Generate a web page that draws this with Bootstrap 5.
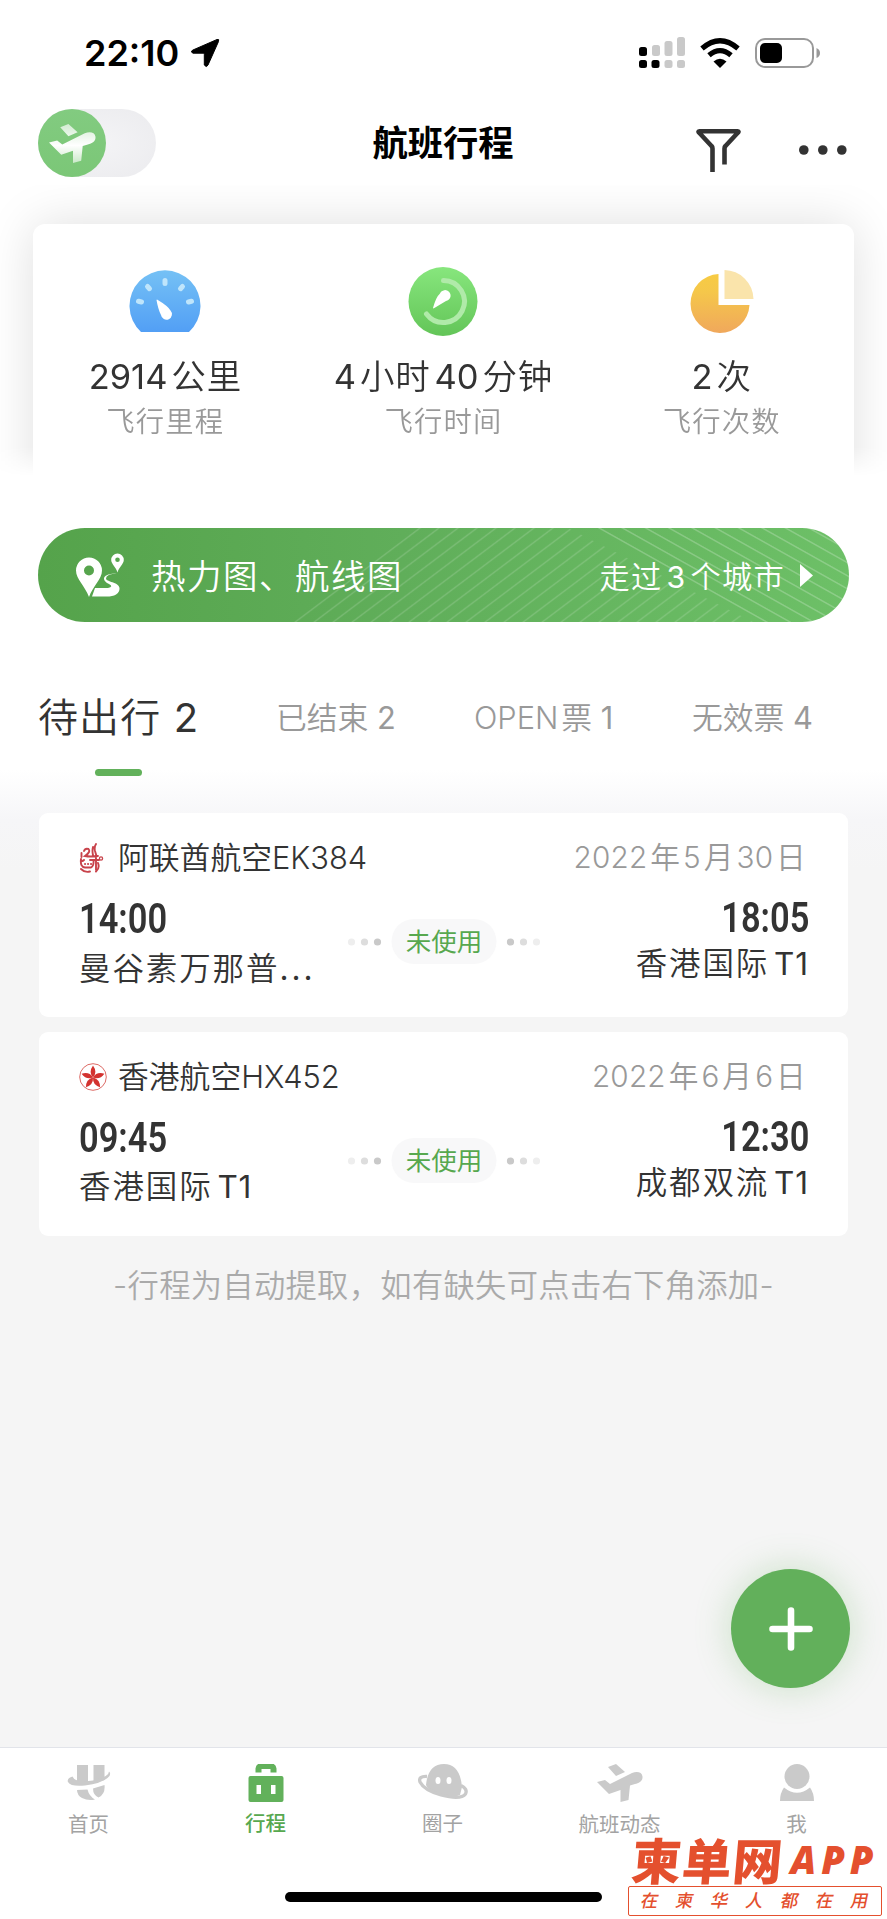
<!DOCTYPE html>
<html lang="zh-CN">
<head>
<meta charset="utf-8">
<meta name="viewport" content="width=device-width, initial-scale=1">
<title>航班行程</title>
<link href="https://cdn.jsdelivr.net/npm/bootstrap@5.3.0/dist/css/bootstrap.min.css" rel="stylesheet">
<style>
body{font-family:Inter,"Noto Sans CJK SC",sans-serif;color:#333;background:#fff;font-weight:350;line-height:1}
.screen{width:887px;height:1919px;overflow:hidden;background:#fff}
svg{display:block;flex:none}
.tx{white-space:nowrap;display:block;line-height:1}
.dim{color:#999}
.num{font-weight:400}
/* status bar */
.statusbar{height:99px;padding:7px 66px 0 84px}
.clock{font-size:36px;font-weight:600;color:#000}
/* title bar */
.titlebar{height:86px;padding:10px 39px 0 38px}
.switch{width:118px;height:68px;background:radial-gradient(#f4f4f6,#ebebee)}
.switch-knob{width:68px;height:68px;background:linear-gradient(#82cb80,#7bc777)}
.title{font-size:35.3px;font-weight:700;color:#000}
/* statistics */
.stats-zone{height:291px;padding:39px 33px 0;overflow:hidden;-webkit-mask-image:linear-gradient(#000 90%,transparent);mask-image:linear-gradient(#000 90%,transparent)}
.stats{height:300px;border-radius:12px;background:#fff;box-shadow:0 0 50px rgba(0,0,0,.13)}
.stats .ico{height:136px;padding-top:43px}
.value{font-size:34.5px;letter-spacing:.8px;height:48px}
.value .num{letter-spacing:0}
.label{font-size:28.3px;letter-spacing:1.2px}
/* map banner */
.banner{height:94px;margin:52px 38px 0;border-radius:47px;background:linear-gradient(90deg,#55a34b,#60ae5a 45%,#6dc067);color:#fff;padding:0 36px 0 37px}
.banner .lines{left:0;top:0}
.banner .tx{padding-top:4px}
.banner .big{font-size:34.5px;letter-spacing:1.5px;margin-left:26px}
.banner .small-t{font-size:30.2px;letter-spacing:1.3px}
/* tabs */
.tabs{height:148px;padding:0 38px}
.tab-i{font-size:30.8px;color:#999;height:76px;flex:none}
.tab-i.on{font-size:40px;color:#333;letter-spacing:1.1px}
.bar{width:47px;height:7px;border-radius:4px;background:#62b15b;flex:none}
/* list */
.list-zone{height:977px;background:linear-gradient(#fff,#fbfbfc 22px,#f6f6f8 50px,#f5f5f5 100px);padding:43px 39px 0}
.flight{height:204px;border-radius:9px;background:#fff;margin-bottom:15px;padding:28px 39px 0 40px}
.line-name{font-size:30.8px}
.line-date{font-size:29.7px;letter-spacing:.2px;margin-right:3px}
.time{font-family:Roboto,sans-serif;font-weight:600;font-size:42px;transform:scaleX(.82);transform-origin:0 0}
.time.r{transform-origin:100% 0}
.city{font-size:31.5px;letter-spacing:1.9px}
.city .num{letter-spacing:.9px}
.chip{width:105px;height:45px;border-radius:23px;background:#f8f8f9;color:#57a84f;font-size:25.5px;font-weight:400}
.note{font-size:31.3px;color:#aaa;margin-top:35px;letter-spacing:.3px}
.fab{right:37px;top:1569px;width:119px;height:119px;background:#62b05b;box-shadow:0 0 36px rgba(98,176,91,.3)}
/* bottom bar */
.tabbar{height:171px;border-top:1px solid #e2e4ea;background:#fff;padding:16px 2px 0 0}
.tabbar .cell{width:20%;font-size:20.5px;color:#a3a3a3;font-weight:400}
.tabbar .cell.on{color:#57a84f;font-weight:500}
.home{left:285px;top:1892px;width:317px;height:10px;border-radius:5px;background:#000}
.wm{left:628px;top:1838px;width:254px;color:#e4502e}
.wm-big{font-family:"Noto Sans CJK SC",sans-serif;font-weight:900;font-size:49.5px;line-height:38px;letter-spacing:1px;transform:skewX(-5deg)}
.wm-app{font-family:"Open Sans","Noto Sans",sans-serif;font-weight:800;font-style:italic;font-size:38px;letter-spacing:5px}
.wm-box{height:30px;border:1px solid #e4502e;border-radius:2px;font-size:17.5px;font-weight:500;padding:0 12px;margin-top:6px}
.wm-box span{transform:skewX(-12deg)}
</style>
</head>
<body>
<svg width="0" height="0" class="position-absolute">
<defs>
<symbol id="plane" viewBox="0 0 46 38"><path d="M0 18 8 16 13 20 35 9C40 7 45 8 45.500 12.500 46 17 42 19 38 20L33 21.500 31.500 36 23.500 38V26L12 30ZM11 3 19 0 28 8 19 12Z"/></symbol>
</defs>
</svg>
<main class="screen position-relative d-flex flex-column">
<header class="statusbar d-flex align-items-center justify-content-between flex-shrink-0">
 <div class="d-flex align-items-center"><span class="tx clock">22:10</span>
 <svg width="30" height="30" viewBox="0 0 30 30" style="margin-left:11px" stroke="#000" stroke-width="1" stroke-linejoin="round"><path d="M27 1.500Q29.500.7 28.500 3.500L18 27Q16.500 30 14.300 27V16.500Q14.300 15.200 13.300 15.200H3Q0 14 2.500 12.200Z"/></svg></div>
 <div class="d-flex align-items-center">
 <svg width="46" height="32" viewBox="0 0 46 32"><g fill="#c9c9c9"><rect x="13" y="8" width="8" height="11" rx="2.500"/><rect x="25.500" y="4" width="8" height="15" rx="2.500"/><rect x="38" y="0" width="8" height="19" rx="2.500"/><rect x="25.500" y="23" width="8" height="8" rx="2.500"/><rect x="38" y="23" width="8" height="8" rx="2.500"/></g><rect y="10" width="8" height="9" rx="2.500"/><rect y="23" width="8" height="8" rx="2.500"/><rect x="12.500" y="23" width="8" height="8" rx="2.500"/></svg>
 <svg width="40" height="30" viewBox="0 0 40 30" style="margin-left:15px"><g fill="none" stroke="#000" stroke-width="5.200"><path d="M2 10.500Q20-5 38 10.500"/><path d="M9 17.300Q20 8 31 17.300"/></g><path d="M13.500 23.500Q20 18 26.500 23.500L20 30Z"/></svg>
 <svg width="66" height="32" viewBox="0 0 66 32" style="margin-left:15px"><rect x="1" y="2" width="57" height="28" rx="9" fill="none" stroke="#999" stroke-width="2"/><rect x="5" y="6" width="22" height="20" rx="5"/><path d="M61.500 11Q65 12.500 65 16T61.500 21Z" fill="#999"/></svg>
 </div>
</header>
<nav class="titlebar d-flex justify-content-between flex-shrink-0 position-relative">
 <div class="switch rounded-pill"><div class="switch-knob rounded-circle d-flex align-items-center justify-content-center">
 <svg width="47" height="39" viewBox="0 0 46 38" fill="url(#pg)"><defs><linearGradient id="pg" x2="0" y2="1"><stop stop-color="#fff" stop-opacity=".65"/><stop offset=".55" stop-color="#fff"/><stop offset="1" stop-color="#fff" stop-opacity=".6"/></linearGradient></defs><path d="M0 18 8 16 13 20 35 9C40 7 45 8 45.500 12.500 46 17 42 19 38 20L33 21.500 31.500 36 23.500 38V26L12 30ZM11 3 19 0 28 8 19 12Z"/></svg></div></div>
 <h1 class="title tx mb-0" style="margin-left:34px;margin-top:17px">航班行程</h1>
 <div class="d-flex" style="margin-top:20px">
 <svg width="45" height="43" viewBox="0 0 45 43" fill="none" stroke="#333" stroke-width="4.600"><path d="M16.500 43V19.500Q16.500 18 15.500 17L3 3.500Q1.800 2.300 3.500 2.300H41.500Q43.200 2.300 42 3.500L29.500 17Q28.500 18 28.500 19.500V35.500"/></svg>
 <svg width="48" height="12" viewBox="0 0 48 12" fill="#333" style="margin:15px 1px 0 58px"><circle cx="4.800" cy="6" r="4.800"/><circle cx="23.800" cy="6" r="4.800"/><circle cx="42.800" cy="6" r="4.800"/></svg>
 </div>
</nav>
<section class="stats-zone flex-shrink-0">
 <div class="stats row g-0 text-center">
 <div class="col-4 d-flex flex-column align-items-center" style="padding-right:9px">
 <div class="ico"><svg width="72" height="66" viewBox="0 -3 72 66"><defs><linearGradient id="bl" x2="0" y2="1"><stop stop-color="#75c1f5"/><stop offset="1" stop-color="#529ff5"/></linearGradient></defs><path d="M12 62A35.500 35.500 0 1 1 60 62Z" fill="url(#bl)"/><g stroke="#bfe5fb" stroke-width="5" stroke-linecap="round"><path d="M36 10.500V13.500M18.500 16.500 20.500 18.700M53.500 16.500 51.500 18.700M9.500 31.300 12.500 32M62.500 31.300 59.500 32"/></g><path d="M28 29.500Q39 36 41.500 40.500A5.500 5.500 0 1 1 32 45Q29 39 27.500 30Z" fill="#fff"/></svg></div>
 <span class="tx value"><span class="num">2914</span>&#8202;公里</span><span class="tx label dim">飞行里程</span>
 </div>
 <div class="col-4 d-flex flex-column align-items-center">
 <div class="ico"><svg width="70" height="70" viewBox="0 0 70 70"><defs><linearGradient id="gr" x2="0" y2="1"><stop stop-color="#87e67d"/><stop offset="1" stop-color="#63c558"/></linearGradient></defs><circle cx="35" cy="34.500" r="34.500" fill="url(#gr)"/><path d="M35.500 13.500A21 21 0 1 1 18.500 47" fill="none" stroke="#b0eaa9" stroke-width="5" stroke-linecap="round"/><path d="M25 41Q28 30 32 26.500A5.500 5.500 0 1 1 38 34Q33 37 25.500 41.500Z" fill="#fff"/></svg></div>
 <span class="tx value"><span class="num">4</span>&#8202;小时&#8202;<span class="num">40</span>&#8202;分钟</span><span class="tx label dim">飞行时间</span>
 </div>
 <div class="col-4 d-flex flex-column align-items-center" style="padding-left:9px">
 <div class="ico"><svg width="64" height="66" viewBox="0 -3 64 66"><defs><linearGradient id="ye" x2="0" y2="1"><stop stop-color="#f7cb43"/><stop offset=".3" stop-color="#f5c74a"/><stop offset="1" stop-color="#f0a85c"/></linearGradient></defs><path d="M28.500 4A29.500 29.500 0 1 0 59.500 35H28.500Z" fill="url(#ye)"/><path d="M34.500 0A29.500 29.500 0 0 1 63.500 29H34.500Z" fill="#fae4ab"/></svg></div>
 <span class="tx value"><span class="num">2</span>&#8202;次</span><span class="tx label dim">飞行次数</span>
 </div>
 </div>
</section>
<section class="banner d-flex align-items-center position-relative overflow-hidden flex-shrink-0">
 <svg class="lines position-absolute" width="811" height="94"><defs><pattern id="la" width="19" height="94" patternUnits="userSpaceOnUse" patternTransform="skewX(-53)"><path d="M2 0V94" stroke="#fff" stroke-width="2.600" stroke-opacity=".14"/></pattern><pattern id="lb" width="23.300" height="94" patternUnits="userSpaceOnUse" patternTransform="skewX(60.700)"><path d="M2 0V94" stroke="#fff" stroke-width="3" stroke-opacity=".22"/></pattern></defs><path d="M380 0H530L715 94H255Z" fill="url(#la)"/><path d="M555 0H811V94H722Z" fill="url(#lb)"/></svg>
 <svg class="position-relative" width="50" height="46" viewBox="0 0 50 46" fill="#fff"><path fill-rule="evenodd" d="M14 5.500A13 13 0 0 0 1 18.500C1 27 10 34 14 45 18 34 27 27 27 18.500A13 13 0 0 0 14 5.500ZM14 13.500A5 5 0 1 1 14 23.500 5 5 0 1 1 14 13.500Z"/><path fill-rule="evenodd" d="M42.500 1.500A6.300 6.300 0 0 0 36.200 8C36.200 12 41 15 42.500 20.500 44 15 48.800 12 48.800 8A6.300 6.300 0 0 0 42.500 1.500ZM42.500 5.500A2.300 2.300 0 1 1 42.500 10.100 2.300 2.300 0 1 1 42.500 5.500Z"/><path d="M42 21.500Q31 22 31 26.500C31 30 44 30 44.500 36 45 42 39 44.500 32 44.500H17L20 36H33Q39 34.500 34 32C26 28 27 21.500 42 21.500Z"/></svg>
 <span class="tx big position-relative">热力图、航线图</span>
 <span class="tx small-t ms-auto position-relative">走过&#8202;<span class="num">3</span>&#8202;个城市</span>
 <svg class="position-relative" width="13" height="23" viewBox="0 0 13 23" fill="#fff" style="margin-left:15px"><path d="M0 0 13 11.500 0 23Z"/></svg>
</section>
<section class="tabs position-relative d-flex flex-shrink-0" style="padding-top:57px">
 <div class="d-flex flex-column" style="width:238px"><span class="tx tab-i on" style="margin-top:19px">待出行 <span class="num">2</span></span><i class="bar" style="margin:-5px 0 0 57px"></i></div>
 <span class="tx tab-i" style="width:198px;margin-top:24px">已结束 <span class="num">2</span></span>
 <span class="tx tab-i" style="width:218px;margin-top:24px">OPEN&#8202;票 <span class="num">1</span></span>
 <span class="tx tab-i" style="margin-top:24px">无效票 <span class="num">4</span></span>
</section>
<section class="list-zone flex-shrink-0">
 <article class="flight">
 <div class="d-flex align-items-center" style="height:34px">
 <svg width="26" height="30" viewBox="0 0 26 30" fill="none" stroke="#c8434b" stroke-linecap="round"><path stroke-width="1.900" d="M17 1Q15 4 16 8L17.500 13M14 4Q13 8 14 12M5 8Q6 5 9.500 6 12 9 6 13 11 14 19 13M2.500 10V14M11 17H20M17 15V27M2 16Q1 24 6 24.500H12Q15 23 14.500 17M2 17Q3 19 5 17M2 26Q6 30 11 28.500M19 20Q21 25 17 28.500"/><circle cx="22" cy="15.500" r="1.600" stroke-width="1.300"/><path stroke-width="2" d="M6 21h.1M9 21h.1M12 21h.1"/></svg>
 <span class="tx line-name" style="margin-left:13px">阿联酋航空EK384</span><span class="tx line-date dim ms-auto">2022&#8202;年&#8202;5&#8202;月&#8202;30&#8202;日</span></div>
 <div class="d-flex position-relative justify-content-between">
 <div style="padding-top:23px"><span class="tx time">14:00</span><span class="tx city" style="margin-top:13px">曼谷素万那普<span class="num" style="letter-spacing:3px">...</span></span></div>
 <div class="d-flex align-items-center position-absolute top-0 start-50 translate-middle-x" style="margin-top:44px">
 <svg width="36" height="8" viewBox="0 0 36 8"><circle cx="5" cy="4" r="3.600" fill="#eee"/><circle cx="18" cy="4" r="3.600" fill="#ddd"/><circle cx="31" cy="4" r="3.600" fill="#c9c9c9"/></svg>
 <span class="chip d-flex align-items-center justify-content-center text-nowrap" style="margin:0 9px 0 9px">未使用</span>
 <svg width="36" height="8" viewBox="0 0 36 8"><circle cx="5" cy="4" r="3.600" fill="#c9c9c9"/><circle cx="18" cy="4" r="3.600" fill="#ddd"/><circle cx="31" cy="4" r="3.600" fill="#eee"/></svg></div>
 <div class="text-end" style="padding-top:22px"><span class="tx time r">18:05</span><span class="tx city" style="margin-top:9px">香港国际&#8202;<span class="num">T1</span></span></div>
 </div>
 </article>
 <article class="flight">
 <div class="d-flex align-items-center" style="height:34px">
 <svg width="28" height="28" viewBox="0 0 28 28"><circle cx="14" cy="14" r="13.300" fill="none" stroke="#dd6b66" stroke-width="1"/><g fill="#d3322f"><path id="pt" d="M14 14.500Q9.300 9 14 2.500 18.700 9 14 14.500Z"/><use href="#pt" transform="rotate(72 14 14.500)"/><use href="#pt" transform="rotate(144 14 14.500)"/><use href="#pt" transform="rotate(216 14 14.500)"/><use href="#pt" transform="rotate(288 14 14.500)"/></g></svg>
 <span class="tx line-name" style="margin-left:11px">香港航空HX452</span><span class="tx line-date dim ms-auto">2022&#8202;年&#8202;6&#8202;月&#8202;6&#8202;日</span></div>
 <div class="d-flex position-relative justify-content-between">
 <div style="padding-top:23px"><span class="tx time">09:45</span><span class="tx city" style="margin-top:12px">香港国际&#8202;<span class="num">T1</span></span></div>
 <div class="d-flex align-items-center position-absolute top-0 start-50 translate-middle-x" style="margin-top:44px">
 <svg width="36" height="8" viewBox="0 0 36 8"><circle cx="5" cy="4" r="3.600" fill="#eee"/><circle cx="18" cy="4" r="3.600" fill="#ddd"/><circle cx="31" cy="4" r="3.600" fill="#c9c9c9"/></svg>
 <span class="chip d-flex align-items-center justify-content-center text-nowrap" style="margin:0 9px 0 9px">未使用</span>
 <svg width="36" height="8" viewBox="0 0 36 8"><circle cx="5" cy="4" r="3.600" fill="#c9c9c9"/><circle cx="18" cy="4" r="3.600" fill="#ddd"/><circle cx="31" cy="4" r="3.600" fill="#eee"/></svg></div>
 <div class="text-end" style="padding-top:22px"><span class="tx time r">12:30</span><span class="tx city" style="margin-top:9px">成都双流&#8202;<span class="num">T1</span></span></div>
 </div>
 </article>
 <p class="note tx text-center mb-0">-行程为自动提取，如有缺失可点击右下角添加-</p>
</section>
<button class="fab position-absolute rounded-circle border-0 p-0 d-flex align-items-center justify-content-center" aria-label="添加"><svg width="44" height="44" viewBox="0 0 44 44" stroke="#fff" stroke-width="6.600" stroke-linecap="round"><path d="M22 3.500V40.500M3.500 22H40.500"/></svg></button>
<footer class="tabbar d-flex flex-shrink-0">
 <div class="cell d-flex flex-column align-items-center"><svg width="44" height="40" viewBox="0 0 44 40" fill="#cacaca"><path d="M10 1H21V20H10ZM26.500 1H37.500V16L26.500 19ZM10 26 20.500 25.500Q22 32 28 35.500 21 37 15 34 10 31 10 26ZM26 24.500 37.500 21Q38.500 30 31.500 33.500 26 31 26 24.500Z"/><path d="M5.500 12.500Q-.5 14.500 1 18 4 23 18 21.500 37 19 42.500 12 44 9 42 7.500 42 13 26 16.500 8 19 5.500 12.500Z"/></svg><span class="tx" style="margin-top:11px">首页</span></div>
 <div class="cell on d-flex flex-column align-items-center"><svg width="36" height="40" viewBox="0 0 36 40"><path fill="#62b15b" fill-rule="evenodd" d="M7.500 8.500V4.500Q8-.5 12.500-.5H24Q28 0 28.500 4.500V8.500H22.500V5H13.500V8.500ZM2.500 12H33.500Q35.500 12 35.500 14V36Q35.500 38 33.500 38H2.500Q.5 38 .5 36V14Q.5 12 2.500 12ZM8.500 21V30H13V21ZM23 21V30H27.500V21Z"/></svg><span class="tx" style="margin-top:10px">行程</span></div>
 <div class="cell d-flex flex-column align-items-center"><svg width="52" height="40" viewBox="0 0 52 40"><path fill="#cacaca" d="M9 21Q11 0 27 0 43 0 45 23L43 31Q33 36 19 29 10 25 9 21Z"/><path d="M10 12.500Q1 12 3 18 7 26 24 31 44 36 48.500 30 51 25 44 21.500" fill="none" stroke="#cacaca" stroke-width="3.300"/><ellipse cx="21" cy="16.500" rx="2.500" ry="3.500" fill="#fff"/><ellipse cx="32" cy="16.500" rx="2.500" ry="3.500" fill="#fff"/></svg><span class="tx" style="margin-top:10px">圈子</span></div>
 <div class="cell d-flex flex-column align-items-center"><svg width="46" height="40" fill="#cacaca"><use href="#plane" width="46" height="38"/></svg><span class="tx" style="margin-top:11px">航班动态</span></div>
 <div class="cell d-flex flex-column align-items-center"><svg width="36" height="40" viewBox="0 0 36 40" fill="#cacaca"><circle cx="18" cy="12.500" r="12.500"/><path d="M5 23.500Q18 34 31 23.500 35 29 35 37H1Q1 29 5 23.500Z"/></svg><span class="tx" style="margin-top:11px">我</span></div>
</footer>
<div class="home position-absolute"></div>
<aside class="wm position-absolute">
 <div class="d-flex align-items-center" style="height:42px;padding-left:4px"><span class="tx wm-big">柬单网</span><span class="tx wm-app" style="margin-left:7px">APP</span></div>
 <div class="wm-box d-flex align-items-center justify-content-between"><span>在</span><span>柬</span><span>华</span><span>人</span><span>都</span><span>在</span><span>用</span></div>
</aside>
</main>
<script src="https://cdn.jsdelivr.net/npm/bootstrap@5.3.0/dist/js/bootstrap.bundle.min.js"></script>
</body>
</html>
